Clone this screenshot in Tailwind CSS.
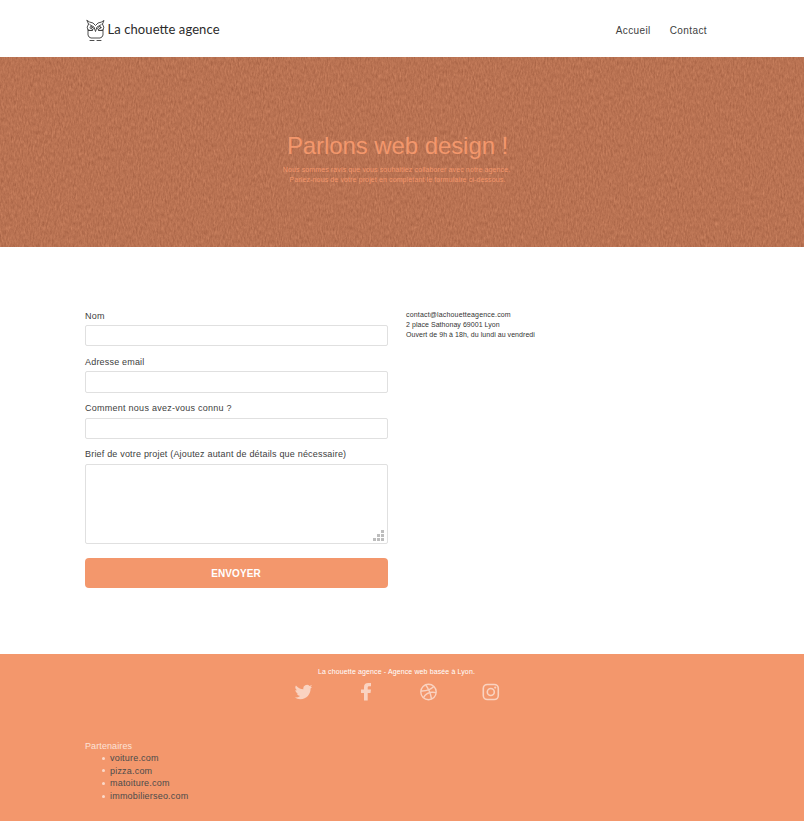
<!DOCTYPE html>
<html lang="fr">
<head>
<meta charset="utf-8">
<title>La chouette agence</title>
<script src="https://cdn.jsdelivr.net/npm/@tailwindcss/browser@4"></script>
</head>
<body class="bg-white font-['Liberation_Sans',Arial,sans-serif] text-[#404040] h-[824px] overflow-hidden">
<header class="h-[57px] pl-[85px] pr-[97px] flex items-center justify-between">
  <svg class="w-[144px] h-[28px] overflow-visible" viewBox="0 -1 144 28" fill="none" stroke="#3a3a3a" stroke-width=".9" stroke-linecap="round" stroke-linejoin="round">
    <path d="M2 4.500Q4.500 6.500 8 7L10.500 9.500L13 7Q16.500 6.500 19 4.500L17.500 8M3.500 8L2 4.500M5 8.800L9 11L10.500 15.500L12 11L16 8.800M3.500 8Q1 11.500 3 14Q6 16 9 12.500M17.500 8Q20 11.500 18 14Q15 16 12 12.500M3 14V19Q3.500 21.500 6 22H15Q17.500 21.500 18 19V14M3.500 14.500H7.500M13.500 14.500H17.500M5 24.500H9M12 24.500H16"/>
    <circle cx="6.200" cy="11.500" r="1.100"/><circle cx="14.800" cy="11.500" r="1.100"/>
    <text x="22.500" y="17.500" textLength="112" lengthAdjust="spacing" fill="#2b2b2b" stroke="none" font-family="Lato, sans-serif" font-size="13">La chouette agence</text>
  </svg>
  <nav class="flex gap-[19px] text-[10px] leading-4 tracking-[.4px] pt-[5px]">
    <a>Accueil</a><a>Contact</a>
  </nav>
</header>
<section class="relative h-[190px] bg-[#bb7150] text-[#f3976c] text-center overflow-hidden">
  <svg class="absolute inset-0 w-full h-full" aria-hidden="true">
    <filter id="paper" x="0" y="0" width="100%" height="100%" color-interpolation-filters="sRGB">
      <feTurbulence type="fractalNoise" baseFrequency=".63 .23" numOctaves="4" seed="21"/>
      <feColorMatrix values=".15 .09 0 0 .605  .13 .08 0 0 .343  .11 .07 0 0 .232  0 0 0 0 1"/>
    </filter>
    <rect width="100%" height="100%" filter="url(#paper)"/>
  </svg>
  <div class="relative pt-[74px] pr-[9px]">
    <h1 class="text-[24px] leading-[30px] tracking-[-.08px]">Parlons web design !</h1>
    <p class="text-[7px] leading-[10px] pt-[4px] pr-[2px] tracking-[.12px]">Nous sommes ravis que vous souhaitiez collaborer avec notre agence.<br><span class="pl-[2px]">Parlez-nous de votre projet en complétant le formulaire ci-dessous.</span></p>
  </div>
</section>
<main class="h-[407px] pl-[85px] pt-[62px] flex gap-[18px]">
  <form class="w-[303px] text-[9px] tracking-[.19px]">
    <label class="block h-[16px] leading-[14px]">Nom</label>
    <div class="h-[21px] border border-[#e0e0e0] rounded-[2px]"></div>
    <label class="block h-[25px] pt-[9px] leading-[14px]">Adresse email</label>
    <div class="h-[22px] border border-[#e0e0e0] rounded-[2px]"></div>
    <label class="block h-[25px] pt-[8px] leading-[14px] tracking-[.26px]">Comment nous avez-vous connu ?</label>
    <div class="h-[21px] border border-[#e0e0e0] rounded-[2px]"></div>
    <label class="block h-[25px] pt-[8px] leading-[14px]">Brief de votre projet (Ajoutez autant de détails que nécessaire)</label>
    <div class="h-[80px] border border-[#e0e0e0] rounded-[2px] flex items-end justify-end pr-[3px] pb-[2px]">
      <svg class="w-[11px] h-[11px]" viewBox="0 0 11 11" fill="#bdbdbd" shape-rendering="crispEdges"><path d="M8 0h3v3H8zM4 4h3v3H4zM8 4h3v3H8zM0 8h3v3H0zM4 8h3v3H4zM8 8h3v3H8z"/></svg>
    </div>
    <button type="button" class="mt-[14px] w-full h-[30px] bg-[#f3976c] rounded-[4px] text-white font-bold text-[10px] tracking-[.1px] flex items-center justify-center pr-px">ENVOYER</button>
  </form>
  <address class="not-italic text-[7px] leading-[10px] pt-px tracking-[.05px] text-[#333]"><a class="tracking-[.17px]">contact@lachouetteagence.com</a><br>2 place Sathonay 69001 Lyon<br>Ouvert de 9h à 18h, du lundi au vendredi</address>
</main>
<footer class="h-[167px] bg-[#f3976c] pt-[13px]">
  <p class="text-white text-[7px] leading-[10px] tracking-[.12px] text-center pr-[11px]">La chouette agence - Agence web basée à Lyon.</p>
  <div class="flex justify-between w-[206px] ml-[294px] mt-[6px] text-[#fad3c1]">
    <svg class="w-[18px] h-[18px]" viewBox="-1 0 24.500 24" fill="currentColor"><path d="M23.950 4.570a10 10 0 0 1-2.820.77 4.960 4.960 0 0 0 2.160-2.720 9.900 9.900 0 0 1-3.120 1.180 4.920 4.920 0 0 0-8.380 4.480A13.930 13.930 0 0 1 1.640 3.160a4.920 4.920 0 0 0 1.520 6.570 4.900 4.900 0 0 1-2.230-.61v.06a4.920 4.920 0 0 0 3.950 4.830 5 5 0 0 1-2.210.08 4.940 4.940 0 0 0 4.600 3.420A9.870 9.870 0 0 1 0 19.540a13.990 13.990 0 0 0 7.550 2.210c9.050 0 14-7.500 14-13.980 0-.21 0-.42-.02-.63a9.940 9.940 0 0 0 2.420-2.570z"/></svg>
    <svg class="w-[18px] h-[18px]" viewBox="0 0 18 18" fill="currentColor"><path d="M7 17.500V10H4V6.500H7V4.200Q7 0 11.200 0H14V3.200H12Q10.700 3.200 10.700 4.600V6.500H14L13.500 10H10.700V17.500Z"/></svg>
    <svg class="w-[18px] h-[18px]" viewBox="0 0 18 18" fill="none" stroke="currentColor" stroke-width="1.400"><circle cx="9.500" cy="9" r="7.700"/><path d="M6.700 2Q11 7.400 12.500 15.800M2 8Q10 8.400 14.800 3.600M4.500 14.600Q8 8 17 9.600"/></svg>
    <svg class="w-[18px] h-[18px]" viewBox="0 0 18 18" fill="none" stroke="currentColor" stroke-width="1.600"><rect x="1.300" y="1.500" width="15" height="15" rx="4"/><circle cx="8.800" cy="9" r="3.500"/><circle cx="13.200" cy="4.600" r="1.100" fill="currentColor" stroke="none"/></svg>
  </div>
  <div class="pl-[85px] pt-[39px] text-[9px] tracking-[.2px] leading-[12.600px]">
    <h2 class="text-[#fce3d8] tracking-[.1px] leading-[12px]">Partenaires</h2>
    <ul class="pl-[17px] text-[#4b4b4b]">
      <li class="flex items-center gap-[5px]"><i class="w-[3px] h-[3px] rounded-full bg-[#fbd9ca]"></i><a>voiture.com</a></li>
      <li class="flex items-center gap-[5px]"><i class="w-[3px] h-[3px] rounded-full bg-[#fbd9ca]"></i><a>pizza.com</a></li>
      <li class="flex items-center gap-[5px]"><i class="w-[3px] h-[3px] rounded-full bg-[#fbd9ca]"></i><a>matoiture.com</a></li>
      <li class="flex items-center gap-[5px]"><i class="w-[3px] h-[3px] rounded-full bg-[#fbd9ca]"></i><a>immobilierseo.com</a></li>
    </ul>
  </div>
</footer>
</body>
</html>
